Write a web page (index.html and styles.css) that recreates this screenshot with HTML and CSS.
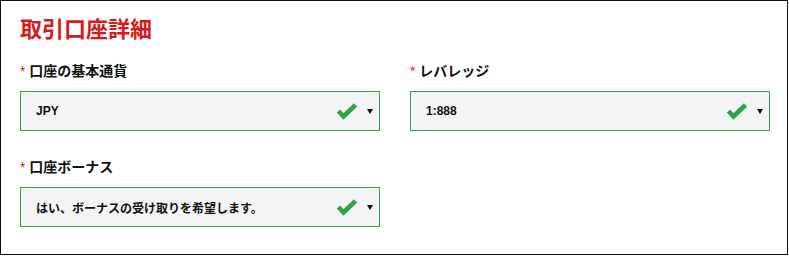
FILE: index.html
```html
<!DOCTYPE html>
<html lang="ja">
<head>
<meta charset="utf-8">
<title>取引口座詳細</title>
<link rel="stylesheet" href="styles.css">
</head>
<body>
<section class="panel">
  <h2 class="title">取引口座詳細</h2>
  <div class="grid">
    <div class="field">
      <div class="label"><span class="req">*</span> 口座の基本通貨</div>
      <div class="select">
        <span class="value">JPY</span>
        <svg class="check" width="22" height="18" viewBox="0 0 22 18"><polyline points="2.5,9 7.5,14.5 19.5,3" fill="none" stroke="#2ea44a" stroke-width="4.6" stroke-linecap="butt" stroke-linejoin="miter"/></svg>
        <span class="caret"></span>
      </div>
    </div>
    <div class="field">
      <div class="label"><span class="req">*</span> レバレッジ</div>
      <div class="select">
        <span class="value">1:888</span>
        <svg class="check" width="22" height="18" viewBox="0 0 22 18"><polyline points="2.5,9 7.5,14.5 19.5,3" fill="none" stroke="#2ea44a" stroke-width="4.6" stroke-linecap="butt" stroke-linejoin="miter"/></svg>
        <span class="caret"></span>
      </div>
    </div>
    <div class="field">
      <div class="label"><span class="req">*</span> 口座ボーナス</div>
      <div class="select">
        <span class="value">はい、ボーナスの受け取りを希望します。</span>
        <svg class="check" width="22" height="18" viewBox="0 0 22 18"><polyline points="2.5,9 7.5,14.5 19.5,3" fill="none" stroke="#2ea44a" stroke-width="4.6" stroke-linecap="butt" stroke-linejoin="miter"/></svg>
        <span class="caret"></span>
      </div>
    </div>
  </div>
</section>
</body>
</html>
```
FILE: styles.css
```css
* { box-sizing: border-box; }
html, body { margin: 0; padding: 0; background: #fff; }
body {
  font-family: "Liberation Sans", Arial, "Noto Sans CJK JP", sans-serif;
  color: #111;
}
.panel {
  width: 788px;
  height: 255px;
  border: 1px solid #111;
  padding: 11px 18px 0 19px;
}
.title {
  margin: 0;
  font-family: "Noto Sans CJK JP", sans-serif;
  font-size: 22px;
  font-weight: 700;
  line-height: 30px;
  color: #d71920;
}
.grid {
  margin-top: 19px;
  display: grid;
  grid-template-columns: 360px 360px;
  column-gap: 30px;
  row-gap: 26px;
}
.label {
  font-size: 14px;
  line-height: 20px;
  font-weight: 700;
  font-family: "Liberation Sans", "Noto Sans CJK JP", sans-serif;
  color: #111;
  margin-bottom: 10px;
}
.req {
  color: #e02020;
  font-weight: 400;
}
.select {
  height: 40px;
  border: 1px solid #2ea44a;
  background: #f4f4f4;
  display: flex;
  align-items: center;
  padding: 0 6px 0 15px;
}
.value {
  flex: 1;
  font-size: 12px;
  font-family: "Liberation Sans", "Noto Sans CJK JP", sans-serif;
  color: #111;
  font-weight: 700;
}
.check {
  display: block;
  margin-right: 9px;
}
.caret {
  width: 0;
  height: 0;
  border-left: 3px solid transparent;
  border-right: 3px solid transparent;
  border-top: 5px solid #111;
}
```
